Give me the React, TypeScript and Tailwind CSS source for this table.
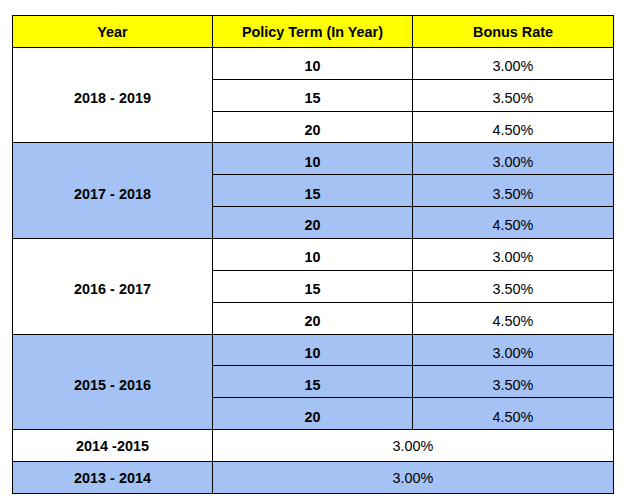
import React from "react";

const blue = "bg-[#a4c2f4]";

type Group = { year: string; bg: string };
const groups: Group[] = [
  { year: "2018 - 2019", bg: "bg-white" },
  { year: "2017 - 2018", bg: blue },
  { year: "2016 - 2017", bg: "bg-white" },
  { year: "2015 - 2016", bg: blue },
];
const terms = [
  { t: "10", r: "3.00%" },
  { t: "15", r: "3.50%" },
  { t: "20", r: "4.50%" },
];

const cell = "border border-black text-center align-middle px-0 pb-0 h-[31.87px]";
const low = `${cell} pt-[6px]`;
const mid = `${cell} pt-[2px]`;

export default function App() {
  return (
    <div
      className="min-h-[499px] bg-white pt-[15px] pl-[12px] text-black"
      style={{ fontFamily: '"Liberation Sans", Arial, sans-serif' }}
    >
      <table className="table-fixed border-collapse w-[601px] text-[14.4px] leading-none">
        <colgroup>
          <col className="w-[200px]" />
          <col className="w-[200px]" />
          <col className="w-[201px]" />
        </colgroup>
        <thead>
          <tr className="bg-[#ffff00]">
            <th className={`${mid} font-bold`}>Year</th>
            <th className={`${mid} font-bold`}>Policy Term (In Year)</th>
            <th className={`${mid} font-bold`}>Bonus Rate</th>
          </tr>
        </thead>
        <tbody>
          {groups.map((g) =>
            terms.map((x, i) => (
              <tr key={g.year + x.t} className={g.bg}>
                {i === 0 && (
                  <td rowSpan={3} className={`${low} font-bold`}>
                    {g.year}
                  </td>
                )}
                <td className={`${low} font-bold`}>{x.t}</td>
                <td className={`${low} font-normal`}>{x.r}</td>
              </tr>
            ))
          )}
          <tr className="bg-white">
            <td className={`${mid} font-bold`}>2014 -2015</td>
            <td colSpan={2} className={`${mid} font-normal`}>3.00%</td>
          </tr>
          <tr className={blue}>
            <td className={`${mid} font-bold`}>2013 - 2014</td>
            <td colSpan={2} className={`${mid} font-normal`}>3.00%</td>
          </tr>
        </tbody>
      </table>
    </div>
  );
}
